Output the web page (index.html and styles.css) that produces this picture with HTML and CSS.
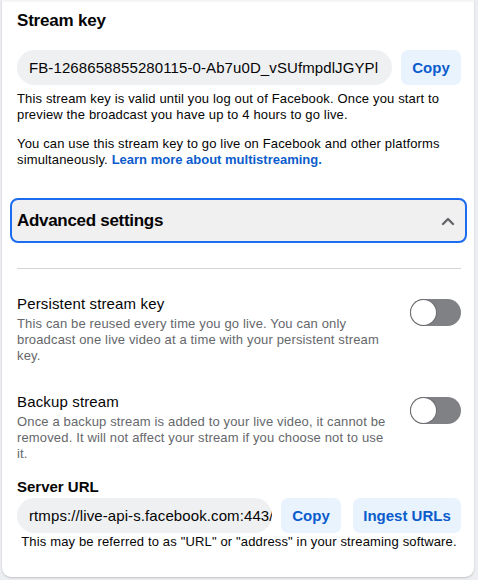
FILE: index.html
```html
<!DOCTYPE html>
<html lang="en">
<head>
    <meta charset="UTF-8">
    <meta name="viewport" content="width=device-width, initial-scale=1.0">
    <title>Stream Setup</title>
    <link rel="stylesheet" href="styles.css">
</head>
<body>
<div class="card">
    <h2 class="section-title">Stream key</h2>

    <div class="field-row">
        <div class="field-pill">FB-1268658855280115-0-Ab7u0D_vSUfmpdlJGYPl</div>
        <button class="soft-btn btn-copy">Copy</button>
    </div>
    <p class="note">This stream key is valid until you log out of Facebook. Once you start to preview the broadcast you have up to 4 hours to go live.</p>
    <p class="note gap">You can use this stream key to go live on Facebook and other platforms simultaneously. <a href="#">Learn more about multistreaming.</a></p>

    <div class="advanced">
        <span>Advanced settings</span>
        <svg class="chevron" width="14" height="10" viewBox="0 0 14 10">
            <polyline points="2,8 7,3 12,8" fill="none" stroke="#65676b" stroke-width="2.4" stroke-linecap="round" stroke-linejoin="round"/>
        </svg>
    </div>

    <div class="divider"></div>

    <div class="setting">
        <div class="setting-text">
            <div class="setting-title">Persistent stream key</div>
            <div class="setting-desc">This can be reused every time you go live. You can only broadcast one live video at a time with your persistent stream key.</div>
        </div>
        <div class="toggle"><div class="knob"></div></div>
    </div>

    <div class="setting">
        <div class="setting-text">
            <div class="setting-title">Backup stream</div>
            <div class="setting-desc">Once a backup stream is added to your live video, it cannot be removed. It will not affect your stream if you choose not to use it.</div>
        </div>
        <div class="toggle"><div class="knob"></div></div>
    </div>

    <div class="server">
        <div class="server-title">Server URL</div>
        <div class="field-row">
            <div class="field-pill">rtmps://live-api-s.facebook.com:443/rtmp/</div>
            <button class="soft-btn btn-copy">Copy</button>
            <button class="soft-btn btn-ingest">Ingest URLs</button>
        </div>
        <p class="caption">This may be referred to as "URL" or "address" in your streaming software.</p>
    </div>
</div>
</body>
</html>
```

FILE: styles.css
```css
* {
    margin: 0;
    padding: 0;
    box-sizing: border-box;
}
body {
    font-family: 'Liberation Sans', Arial, Helvetica, sans-serif;
    background-color: #eceef1;
    color: #050505;
    height: 580px;
    overflow: hidden;
}
.card {
    background: #ffffff;
    margin-left: 2px;
    width: 472px;
    height: 577px;
    padding: 11px 13px 0 15px;
    border-radius: 0 0 9px 9px;
    box-shadow: 0 1px 2px rgba(0,0,0,0.18), inset 0 3px 3px -2px rgba(0,0,0,0.08);
}
.section-title {
    font-size: 17px;
    font-weight: bold;
    line-height: 20px;
    letter-spacing: -0.2px;
}
.field-row {
    display: flex;
    gap: 9px;
    margin-top: 19px;
}
.field-pill {
    flex: 1;
    min-width: 0;
    height: 35px;
    line-height: 35px;
    background: #eff0f2;
    border-radius: 18px;
    padding: 0 12px;
    font-size: 15px;
    letter-spacing: 0.1px;
    white-space: nowrap;
    overflow: hidden;
}
.soft-btn {
    height: 35px;
    padding: 0;
    border: none;
    border-radius: 7px;
    background: #e9f3fe;
    color: #0b5ccc;
    font-family: inherit;
    font-size: 15px;
    font-weight: bold;
}
.btn-copy {
    width: 60px;
}
.btn-ingest {
    width: 108px;
    margin-left: 3px;
}
.note {
    margin-top: 6px;
    font-size: 13px;
    line-height: 16px;
    letter-spacing: 0.15px;
}
.note.gap {
    margin-top: 13px;
}
.note a {
    color: #0b5ccc;
    font-weight: bold;
    letter-spacing: 0;
    text-decoration: none;
}
.advanced {
    margin: 30px -6px 0 -7px;
    height: 45px;
    border: 2px solid #1c6cf0;
    border-radius: 8px;
    background: #f0f0f0;
    display: flex;
    align-items: center;
    justify-content: space-between;
    padding: 0 10px 0 5px;
    font-size: 17px;
    font-weight: bold;
    letter-spacing: -0.3px;
}
.divider {
    height: 1px;
    background: #d3d5d9;
    margin-top: 25px;
}
.setting {
    display: flex;
    align-items: flex-start;
    gap: 20px;
    margin-top: 25px;
}
.setting + .setting {
    margin-top: 28px;
}
.setting-text {
    flex: 1;
}
.setting-title {
    font-size: 15px;
    line-height: 20px;
    letter-spacing: 0.15px;
}
.setting-desc {
    margin-top: 2px;
    font-size: 13px;
    line-height: 16px;
    letter-spacing: 0.15px;
    color: #65676b;
}
.toggle {
    width: 51px;
    height: 27px;
    margin-top: 5px;
    border-radius: 14px;
    background: #808185;
    padding: 1px;
}
.knob {
    width: 25px;
    height: 25px;
    border-radius: 50%;
    background: #ffffff;
    box-shadow: 0 0 0 1px #6d6e72;
}
.server {
    margin-top: 15px;
}
.server-title {
    font-size: 15px;
    font-weight: bold;
    line-height: 20px;
}
.server .field-row {
    margin-top: 1px;
}
.caption {
    font-size: 13px;
    line-height: 16px;
    letter-spacing: 0.15px;
    text-align: center;
    margin-top: 1px;
}
```
